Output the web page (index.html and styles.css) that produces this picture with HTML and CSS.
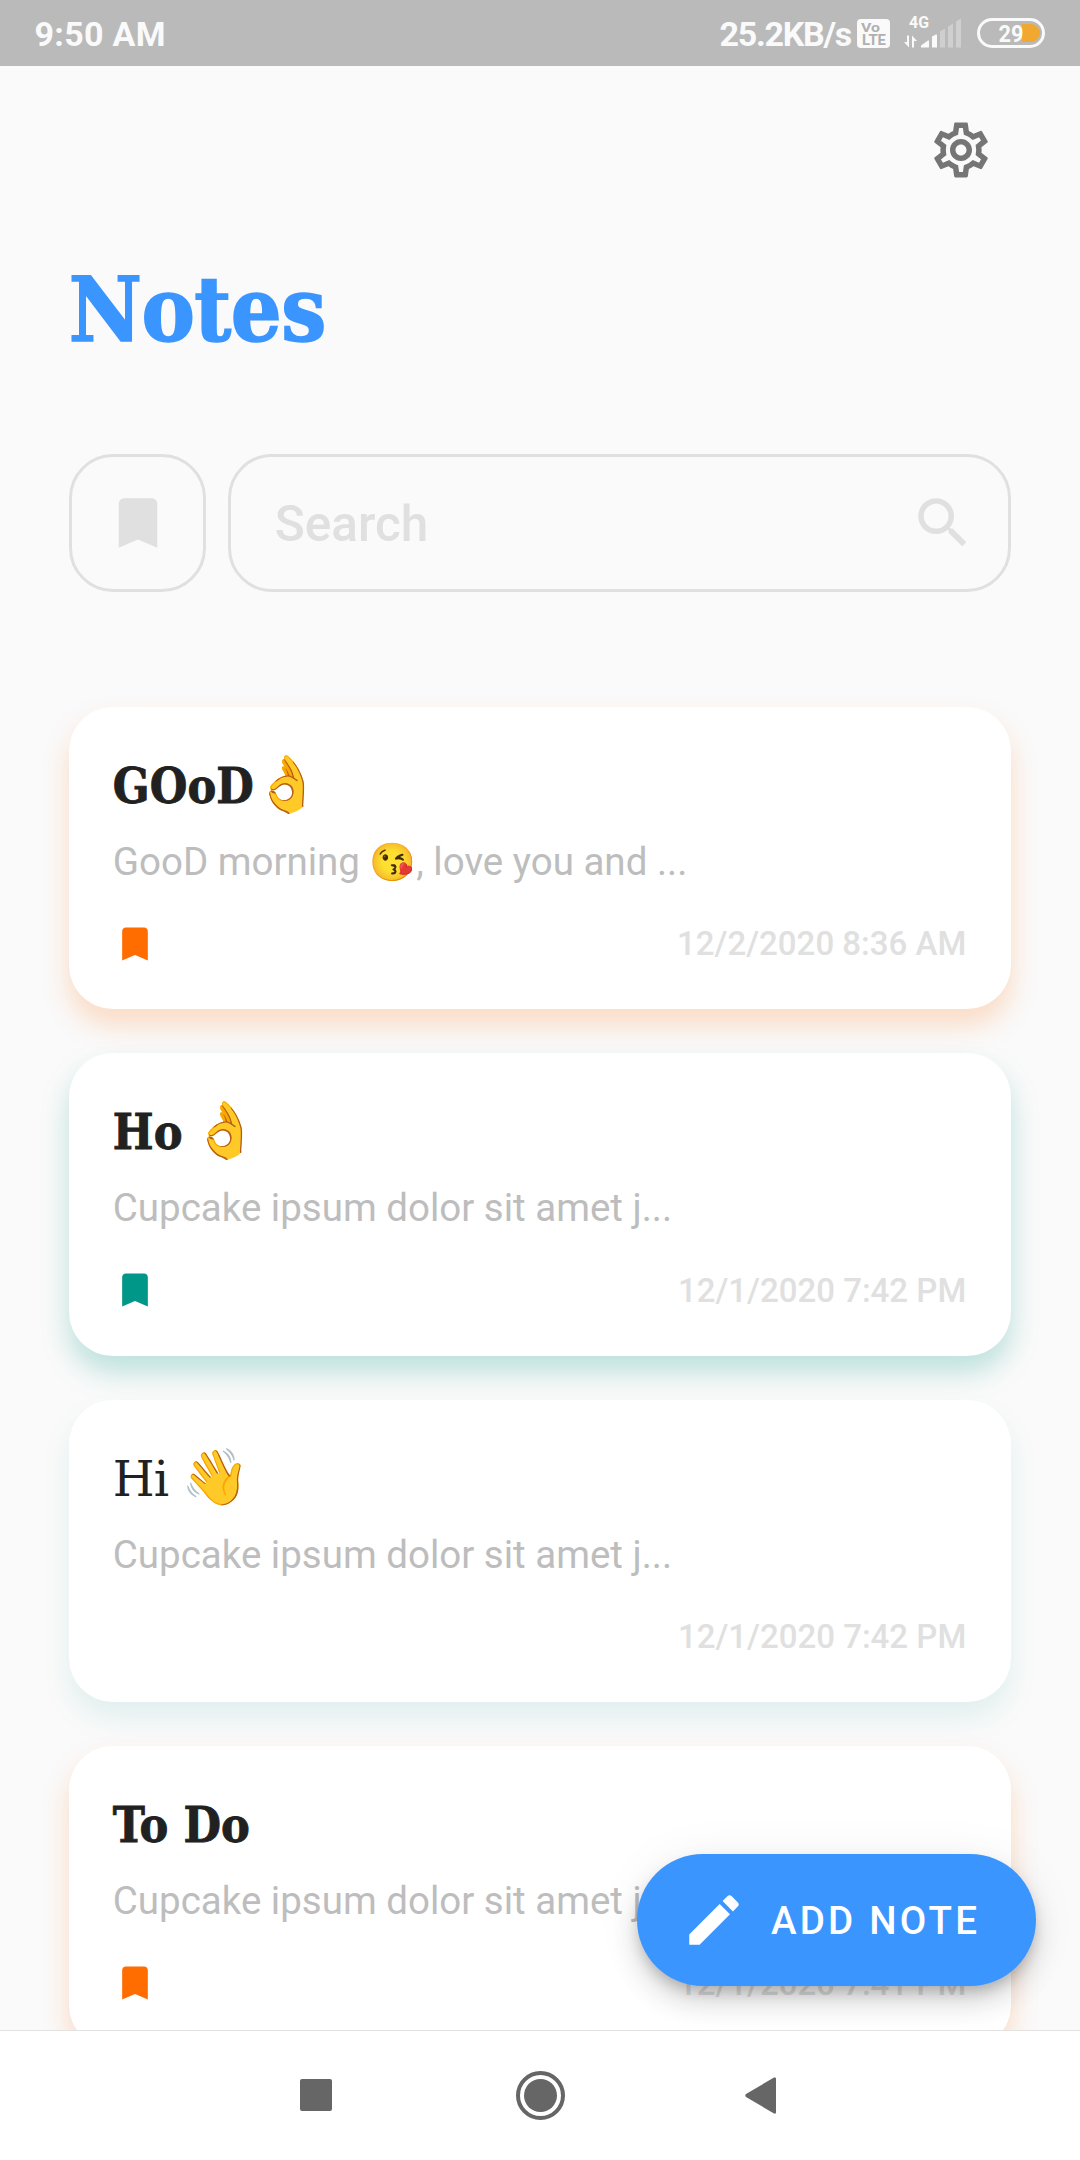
FILE: index.html
```html
<!DOCTYPE html>
<html lang="en">
<head>
<meta charset="utf-8">
<title>Notes</title>
<link rel="stylesheet" href="styles.css">
</head>
<body>
<svg class="defs" width="0" height="0">
  <symbol id="bookmark" viewBox="0 0 24 24"><path d="M17 3H7c-1.1 0-2 .9-2 2v16l7-3 7 3V5c0-1.1-.9-2-2-2z"/></symbol>
</svg>
<div class="screen">
  <header class="status">
    <span class="clock">9:50 AM</span>
    <span class="speed">25.2KB/s</span>
    <svg class="volte" width="33" height="29" viewBox="0 0 33 29"><rect width="33" height="29" rx="4" fill="#fafafa"/><text x="4" y="12.500" font-size="13.500" textLength="19" lengthAdjust="spacingAndGlyphs">Vo</text><text x="5" y="25.500" font-size="14" textLength="24" lengthAdjust="spacingAndGlyphs">LTE</text></svg>
    <svg class="signal" width="58" height="38" viewBox="0 -6 58 38"><text x="5" y="11.500" font-size="16.500" textLength="20" lengthAdjust="spacingAndGlyphs">4G</text><path d="M3 19.500h2v12L0 26h3zM8 31.500v-12l5 5.500h-3v6.500z"/><path d="M17 31.500v-2l7-5h1v7zM28 31.500v-11l4-2h1v13z"/><path class="dim" d="M36 31.500V15.500l5-3v19zM44 31.500V10.500l5-3v24zM52 31.500V5.500l5-3v29z"/></svg>
    <svg class="battery" width="68" height="30" viewBox="0 0 68 30"><path d="M45 6h9a9 9 0 0 1 0 18h-9z" fill="#f0a830"/><rect x="1.500" y="1.500" width="65" height="27" rx="13.500" fill="none" stroke="#fafafa" stroke-width="3"/><text x="21.500" y="23.500" font-size="24.500" textLength="25" lengthAdjust="spacingAndGlyphs">29</text></svg>
  </header>
  <main class="content">
    <div class="toolbar"><svg class="icon gear" viewBox="0 0 24 24"><path d="M19.430 12.980c.04-.32.07-.64.07-.98 0-.34-.03-.66-.07-.98l2.110-1.650c.19-.15.24-.42.12-.64l-2-3.460c-.09-.16-.26-.25-.44-.25-.06 0-.12.01-.17.03l-2.490 1c-.52-.4-1.080-.73-1.690-.98l-.38-2.650C14.460 2.180 14.250 2 14 2h-4c-.25 0-.46.18-.49.42l-.38 2.650c-.61.25-1.170.59-1.690.98l-2.490-1c-.06-.02-.12-.03-.18-.03-.17 0-.34.09-.43.25l-2 3.460c-.13.22-.07.49.12.64l2.110 1.650c-.04.32-.07.65-.07.98 0 .33.03.66.07.98l-2.110 1.650c-.19.15-.24.42-.12.64l2 3.460c.09.16.26.25.44.25.06 0 .12-.01.17-.03l2.490-1c.52.4 1.080.73 1.690.98l.38 2.650c.03.24.24.42.49.42h4c.25 0 .46-.18.49-.42l.38-2.650c.61-.25 1.170-.59 1.690-.98l2.490 1c.06.02.12.03.18.03.17 0 .34-.09.43-.25l2-3.460c.12-.22.07-.49-.12-.64l-2.110-1.650zm-1.980-1.710c.04.31.05.52.05.73 0 .21-.02.43-.05.73l-.14 1.130.89.7 1.080.84-.7 1.210-1.270-.51-1.040-.42-.9.68c-.43.32-.84.56-1.250.73l-1.060.43-.16 1.130-.2 1.350h-1.400l-.19-1.350-.16-1.130-1.060-.43c-.43-.18-.83-.41-1.230-.71l-.91-.7-1.060.43-1.270.51-.7-1.210 1.080-.84.89-.7-.14-1.130c-.03-.31-.05-.54-.05-.74s.02-.43.05-.73l.14-1.130-.89-.7-1.080-.84.7-1.210 1.270.51 1.040.42.9-.68c.43-.32.84-.56 1.250-.73l1.060-.43.16-1.130.2-1.350h1.390l.19 1.350.16 1.130 1.060.43c.43.18.83.41 1.230.71l.91.7 1.060-.43 1.270-.51.7 1.210-1.070.85-.89.7.14 1.130zM12 8c-2.210 0-4 1.790-4 4s1.790 4 4 4 4-1.790 4-4-1.790-4-4-4zm0 6c-1.100 0-2-.9-2-2s.9-2 2-2 2 .9 2 2-.9 2-2 2z"/></svg></div>
    <h1 class="heading">Notes</h1>
    <div class="filters">
      <div class="box mark"><svg class="icon"><use href="#bookmark"/></svg></div>
      <div class="box search"><span>Search</span><svg class="icon" viewBox="0 0 24 24"><path d="M15.500 14h-.79l-.28-.27C15.410 12.590 16 11.110 16 9.500 16 5.910 13.090 3 9.500 3S3 5.910 3 9.500 5.910 16 9.500 16c1.610 0 3.090-.59 4.230-1.570l.27.28v.79l5 4.990L20.490 19l-4.990-5zm-6 0C7.010 14 5 11.990 5 9.500S7.010 5 9.500 5 14 7.010 14 9.500 11.990 14 9.500 14z"/></svg></div>
    </div>
    <section class="list">
      <article class="card orange">
        <h2 class="title">GOoD<span class="emoji tight">👌</span></h2>
        <p class="body">GooD morning <span class="emoji small">😘</span>, love you and ...</p>
        <div class="meta"><svg class="icon tiny"><use href="#bookmark"/></svg><time>12/2/2020 8:36 AM</time></div>
      </article>
      <article class="card teal">
        <h2 class="title">Ho<span class="emoji">👌</span></h2>
        <p class="body">Cupcake ipsum dolor sit amet j...</p>
        <div class="meta"><svg class="icon tiny"><use href="#bookmark"/></svg><time>12/1/2020 7:42 PM</time></div>
      </article>
      <article class="card plain">
        <h2 class="title light">Hi<span class="emoji">👋</span></h2>
        <p class="body">Cupcake ipsum dolor sit amet j...</p>
        <div class="meta"><time>12/1/2020 7:42 PM</time></div>
      </article>
      <article class="card orange">
        <h2 class="title">To Do</h2>
        <p class="body">Cupcake ipsum dolor sit amet j...</p>
        <div class="meta"><svg class="icon tiny"><use href="#bookmark"/></svg><time>12/1/2020 7:41 PM</time></div>
      </article>
    </section>
    <div class="fab"><svg class="icon" viewBox="0 0 24 24"><path d="M3 17.250V21h3.750L17.810 9.940l-3.750-3.750L3 17.250zM20.710 7.040c.39-.39.39-1.020 0-1.410l-2.340-2.340c-.39-.39-1.020-.39-1.410 0l-1.830 1.830 3.750 3.750 1.830-1.830z"/></svg><span>ADD NOTE</span></div>
  </main>
  <nav class="nav">
    <svg width="32" height="32"><rect width="32" height="32" rx="2"/></svg>
    <svg width="49" height="49" viewBox="0 0 49 49"><circle cx="24.500" cy="24.500" r="22.500" fill="none" stroke="#666" stroke-width="4"/><circle cx="24.500" cy="24.500" r="16.500"/></svg>
    <svg width="32" height="37" viewBox="0 0 32 37"><path d="M1 17Q-.5 18.500 1 20L29 36.500Q31 37 31 35.500V1.500Q31 0 29 .5z"/></svg>
  </nav>
</div>
</body>
</html>
```
FILE: styles.css
```css
* { box-sizing: border-box; }
body, h1, h2, p { margin: 0; }
body { background: #fafafa; font-family: Roboto, sans-serif; }
svg { display: block; flex: none; }
.defs { position: absolute; }
.screen { width: 1080px; height: 2160px; display: flex; flex-direction: column; overflow: hidden; }

.status { height: 66px; flex: none; display: flex; align-items: center; padding: 0 35px 0 34.500px; background: #bababa; color: #fafafa; font-weight: 700; font-size: 34px; line-height: 66px; }
.status text, .status path { fill: #fafafa; font-weight: 700; }
.status .dim { fill: #cfcfcf; }
.status .battery path { fill: #f0a830; }
.status .volte text { fill: #b0b0b0; }
.clock { letter-spacing: .3px; }
.speed { margin-left: auto; letter-spacing: -1.300px; }
.clock, .speed { padding-top: 2px; }
.volte { margin: 1px 0 0 6px; }
.signal { margin: -8px 0 0 14px; }
.battery { margin-left: 15px; }

.content { position: relative; flex: 1; min-height: 0; padding: 0 68.750px; overflow: hidden; }
.icon { width: 66px; height: 66px; fill: currentColor; }
.toolbar { display: flex; justify-content: flex-end; padding: 51px 17px 0 0; height: 151px; color: #757575; }
.heading { height: 237px; padding-top: 38px; color: #3b95ff; font: 700 89px/110px "DejaVu Serif Condensed", "DejaVu Serif", serif; font-stretch: condensed; letter-spacing: -.5px; -webkit-text-stroke: 1.500px currentColor; }
.filters { display: flex; gap: 22px; height: 137.500px; color: #e0e0e0; }
.box { height: 137.500px; border: 3px solid #e0e0e0; border-radius: 44px; display: flex; align-items: center; }
.mark { width: 137.500px; justify-content: center; padding-top: 1px; }
.search { flex: 1; justify-content: space-between; padding: 0 32.500px 0 43.500px; font-size: 49.500px; font-weight: 500; }
.search span { padding-top: 2px; }

.list { display: flex; flex-direction: column; gap: 44px; padding-top: 115px; }
.card { height: 302.500px; flex: none; padding: 44px; border-radius: 44px; background: #fff; }
.orange { box-shadow: 0 16px 28px rgba(255, 109, 0, .22); color: #ff6d00; }
.teal { box-shadow: 0 16px 28px rgba(0, 150, 136, .25); color: #009688; }
.plain { box-shadow: 0 16px 28px rgba(0, 150, 136, .1); }
.title { display: flex; height: 73px; color: #212121; font: 700 48px/70px "DejaVu Serif Condensed", "DejaVu Serif", serif; font-stretch: condensed; letter-spacing: .1px; white-space: pre; -webkit-text-stroke: .8px currentColor; }
.light { font-family: "DejaVu Serif", serif; font-stretch: normal; font-weight: 400; letter-spacing: -.8px; -webkit-text-stroke: 0; }
.emoji { font: 400 55px/66px "Noto Color Emoji", sans-serif; font-stretch: normal; letter-spacing: 0; margin-left: 9px; -webkit-text-stroke: 0; }
.emoji.tight { margin-left: -1px; }
.light .emoji { margin-left: 13px; }
.emoji.small { font-size: 37.500px; line-height: 1; margin: 0; }
.body { height: 76px; color: #bdbdbd; font-size: 38.500px; line-height: 76px; white-space: nowrap; }
.meta { display: flex; align-items: center; height: 88px; }
.tiny { width: 44px; height: 44px; }
.meta time { margin-left: auto; padding-right: 1px; color: #e0e0e0; font-size: 33px; font-weight: 500; }

.fab { position: absolute; right: 44px; bottom: 44px; width: 399px; height: 132px; padding-left: 44px; border-radius: 66px; display: flex; align-items: center; gap: 24px; background: #3b95ff; color: #fff; font-size: 38.500px; font-weight: 500; letter-spacing: 3.200px; white-space: nowrap; box-shadow: 0 8px 14px -3px rgba(0,0,0,.2), 0 16px 28px rgba(0,0,0,.14), 0 3px 50px rgba(0,0,0,.06); }

.nav { height: 130px; flex: none; display: flex; align-items: center; padding: 0 303px 1px 300px; justify-content: space-between; background: #fff; border-top: 1px solid #e2e2e2; fill: #666; }
.nav svg:nth-child(2) { margin-left: 3px; }
```
